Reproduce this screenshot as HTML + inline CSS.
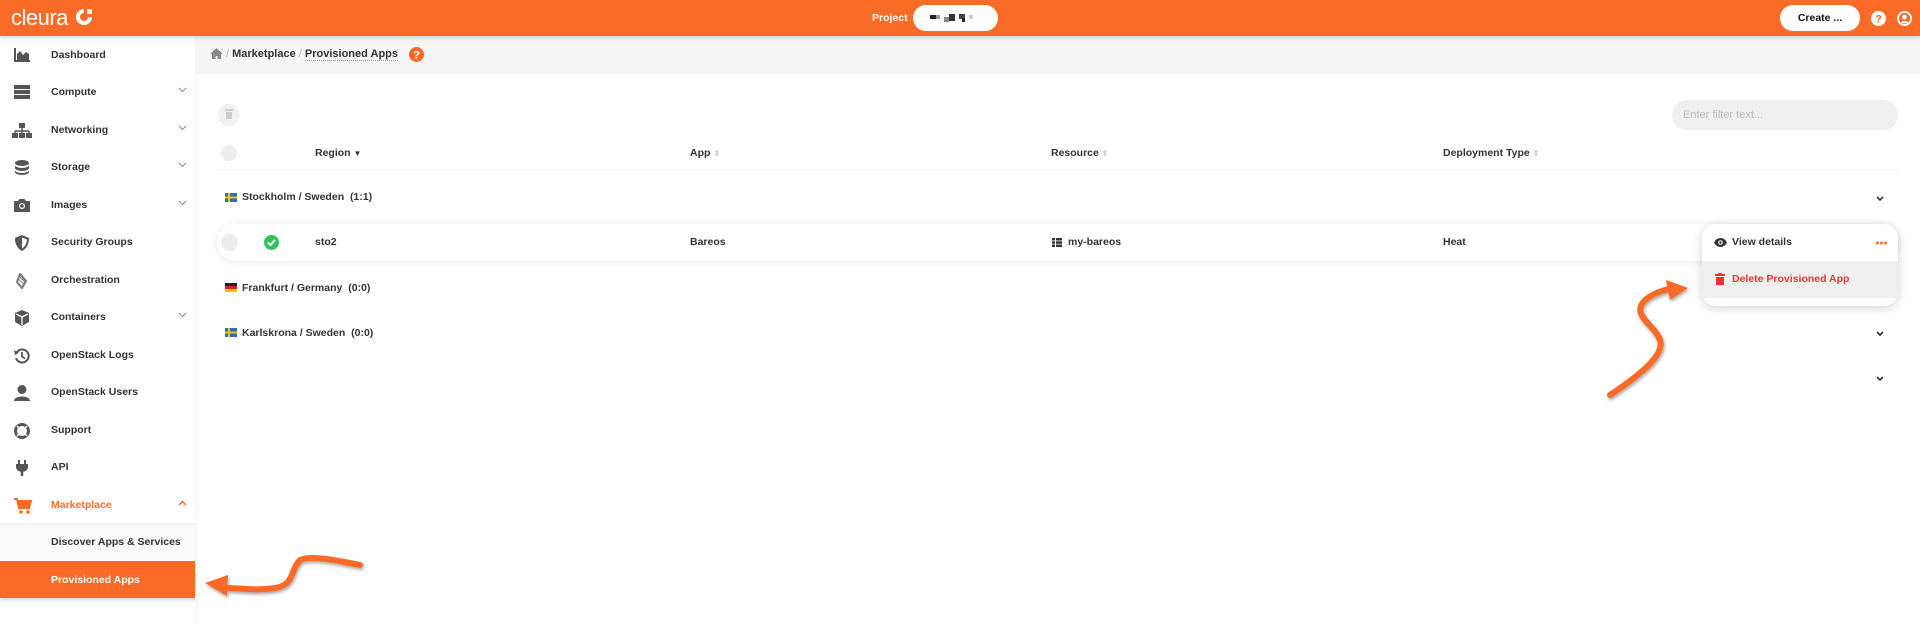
<!DOCTYPE html>
<html><head><meta charset="utf-8"><style>
*{box-sizing:border-box;margin:0;padding:0}
body{width:1920px;height:625px;overflow:hidden;background:#fff;font-family:"Liberation Sans",sans-serif;color:#333;position:relative;font-size:10.5px;font-weight:bold}
.top{position:absolute;left:0;top:0;width:1920px;height:36px;background:#f96b27;box-shadow:0 2px 4px rgba(0,0,0,.15);z-index:5}
.logo{position:absolute;left:11px;top:5px;color:#fff;font-size:22px;font-weight:normal;letter-spacing:-.5px}
.side{position:absolute;left:0;top:36px;width:195px;height:589px;background:#fff;box-shadow:2px 0 4px rgba(0,0,0,.05)}
.mi{position:absolute;left:0;width:195px;height:37px;line-height:37px}
.mi .t{position:absolute;left:51px}
.mi svg.i{position:absolute;left:14px;top:11px}
.chev{position:absolute;left:178px;top:13px}
.crumb{position:absolute;left:195px;top:36px;width:1725px;height:38px;background:#f5f5f5}
.txt{position:absolute;white-space:nowrap}
.circ{position:absolute;width:16px;height:16px;border-radius:50%;background:#ececec}
</style></head><body>
<div class="top">
 <div class="logo">cleura <svg width="20" height="20" viewBox="0 0 20 20" style="vertical-align:-2px"><path d="M10 2a8 8 0 1 0 8 8h-4a4 4 0 1 1-4-4z" fill="#fff"/><rect x="13" y="2" width="5" height="5" fill="#fff"/></svg></div>
 <div class="txt" style="left:872px;top:12px;color:#fff;font-size:10.5px">Project</div>
 <div style="position:absolute;left:913px;top:5px;width:85px;height:26px;border-radius:13px;background:#fff">
  <div style="position:absolute;left:17px;top:10px;width:6px;height:4px;background:#222"></div><div style="position:absolute;left:23px;top:10px;width:4px;height:4px;background:#999"></div>
  <div style="position:absolute;left:31px;top:12px;width:5px;height:5px;background:#888"></div><div style="position:absolute;left:36px;top:9px;width:6px;height:7px;background:#333"></div>
  <div style="position:absolute;left:46px;top:9px;width:6px;height:5px;background:#444"></div><div style="position:absolute;left:49px;top:13px;width:3px;height:4px;background:#222"></div>
  <div style="position:absolute;left:56px;top:10px;width:4px;height:4px;background:#ccc"></div>
 </div>
 <div style="position:absolute;left:1780px;top:5px;width:80px;height:26px;border-radius:13px;background:#fff;text-align:center;line-height:26px;font-size:10.5px;color:#111">Create ...</div>
 <svg style="position:absolute;left:1871px;top:11px" width="15" height="15" viewBox="0 0 16 16"><circle cx="8" cy="8" r="8" fill="#fff"/><text x="8" y="12.5" text-anchor="middle" font-size="12" font-weight="bold" fill="#f96b27" font-family="Liberation Sans">?</text></svg>
 <svg style="position:absolute;left:1897px;top:11px" width="15" height="15" viewBox="0 0 16 16"><circle cx="8" cy="8" r="7" fill="none" stroke="#fff" stroke-width="2"/><circle cx="8" cy="6.5" r="2.5" fill="#fff"/><path d="M3.5 13a5 4 0 0 1 9 0" fill="#fff"/></svg>
</div>

<div class="side">
 <div class="mi" style="top:1px"><svg class="i" width="16" height="14"><path d="M1 0v13h15" stroke="#555" stroke-width="2" fill="none"/><path d="M3 12V6l3 -3 3 4 3-3 3 2v6z" fill="#555"/></svg><span class="t">Dashboard</span></div>
 <div class="mi" style="top:38px"><svg class="i" width="16" height="14"><rect x="0" y="0" width="16" height="4" fill="#555"/><rect x="0" y="5" width="16" height="4" fill="#555"/><rect x="0" y="10" width="16" height="4" fill="#555"/></svg><span class="t">Compute</span><svg class="chev" width="9" height="6"><path d="M1 1l3.5 3.5L8 1" stroke="#888" fill="none"/></svg></div>
 <div class="mi" style="top:76px"><svg class="i" width="20" height="15" style="left:12px"><rect x="7" y="0" width="6" height="5" fill="#555"/><path d="M10 5v3M3 8h14M3 8v2M10 8v2M17 8v2" stroke="#555" stroke-width="1.5"/><rect x="0" y="10" width="6" height="5" fill="#555"/><rect x="7" y="10" width="6" height="5" fill="#555"/><rect x="14" y="10" width="6" height="5" fill="#555"/></svg><span class="t">Networking</span><svg class="chev" width="9" height="6"><path d="M1 1l3.5 3.5L8 1" stroke="#888" fill="none"/></svg></div>
 <div class="mi" style="top:113px"><svg class="i" width="16" height="15"><ellipse cx="8" cy="3" rx="7" ry="3" fill="#555"/><path d="M1 5v3a7 3 0 0 0 14 0V5a7 3 0 0 1-14 0zM1 10v2a7 3 0 0 0 14 0v-2a7 3 0 0 1-14 0z" fill="#555"/></svg><span class="t">Storage</span><svg class="chev" width="9" height="6"><path d="M1 1l3.5 3.5L8 1" stroke="#888" fill="none"/></svg></div>
 <div class="mi" style="top:151px"><svg class="i" width="16" height="14"><path d="M0 3h4l1.5-2h5L12 3h4v11H0z" fill="#555"/><circle cx="8" cy="8" r="3" fill="#fff"/><circle cx="8" cy="8" r="1.8" fill="#555"/></svg><span class="t">Images</span><svg class="chev" width="9" height="6"><path d="M1 1l3.5 3.5L8 1" stroke="#888" fill="none"/></svg></div>
 <div class="mi" style="top:188px"><svg class="i" width="16" height="16"><path d="M8 0L15 3c0 7-3 11-7 13C4 14 1 10 1 3z" fill="#555"/><path d="M8 2.5v11c2.5-1.5 4.5-4 5-9z" fill="#fff"/></svg><span class="t">Security Groups</span></div>
 <div class="mi" style="top:226px"><svg class="i" width="16" height="16"><path d="M6 1l6 7-4 7-5-6z" fill="none" stroke="#777" stroke-width="2"/><path d="M4 6l6 5M6 4l5 5" stroke="#777"/></svg><span class="t">Orchestration</span></div>
 <div class="mi" style="top:263px"><svg class="i" width="16" height="16"><path d="M8 0l7 3v9l-7 4-7-4V3z" fill="#555"/><path d="M2 4l6 3 6-3M8 7v8" stroke="#fff" stroke-width="1.3" fill="none"/></svg><span class="t">Containers</span><svg class="chev" width="9" height="6"><path d="M1 1l3.5 3.5L8 1" stroke="#888" fill="none"/></svg></div>
 <div class="mi" style="top:301px"><svg class="i" width="16" height="16"><path d="M3 4A6.5 6.5 0 1 1 2 10" stroke="#555" stroke-width="2" fill="none"/><path d="M0 2l1 5 4-2z" fill="#555"/><path d="M8 4v4.5l3 2" stroke="#555" stroke-width="1.8" fill="none"/></svg><span class="t">OpenStack Logs</span></div>
 <div class="mi" style="top:338px"><svg class="i" width="16" height="16"><circle cx="8" cy="4.5" r="4.5" fill="#555"/><path d="M0 16c0-6 16-6 16 0z" fill="#555"/></svg><span class="t">OpenStack Users</span></div>
 <div class="mi" style="top:376px"><svg class="i" width="16" height="16"><circle cx="8" cy="8" r="6.5" stroke="#555" stroke-width="3" fill="none"/><circle cx="8" cy="8" r="3" fill="#fff"/><path d="M3 3l3 3M13 3l-3 3M3 13l3-3M13 13l-3-3" stroke="#fff" stroke-width="1.5"/></svg><span class="t">Support</span></div>
 <div class="mi" style="top:413px"><svg class="i" width="16" height="16"><path d="M5 0v4M11 0v4" stroke="#555" stroke-width="2"/><path d="M2 4h12v3a6 5 0 0 1-12 0z" fill="#555"/><path d="M8 10v6" stroke="#555" stroke-width="2.5"/></svg><span class="t">API</span></div>
 <div class="mi" style="top:451px;color:#f96b27"><svg class="i" width="18" height="16"><path d="M0 1h3l2 9h10l2-7H4" fill="none" stroke="#f96b27" stroke-width="2"/><path d="M4 3h13l-2 7H5z" fill="#f96b27"/><circle cx="7" cy="14" r="1.8" fill="#f96b27"/><circle cx="14" cy="14" r="1.8" fill="#f96b27"/></svg><span class="t">Marketplace</span><svg class="chev" width="9" height="6"><path d="M1 5l3.5-3.5L8 5" stroke="#f96b27" stroke-width="1.5" fill="none"/></svg></div>
 <div style="position:absolute;left:0;top:487px;width:195px;height:38px;background:#fafafa;box-shadow:inset 0 3px 4px -3px rgba(0,0,0,.1)"><span class="txt" style="left:51px;top:13px">Discover Apps &amp; Services</span></div>
 <div style="position:absolute;left:0;top:525px;width:195px;height:37px;background:#f96b27;color:#fff;box-shadow:0 2px 2px rgba(0,0,0,.15)"><span class="txt" style="left:51px;top:13px">Provisioned Apps</span></div>
</div>

<div class="crumb">
 <svg style="position:absolute;left:15px;top:12px" width="13" height="11" viewBox="0 0 13 11"><path d="M6.5 0L0 6h2v5h3.5V8h2v3H11V6h2z" fill="#888"/></svg>
 <span class="txt" style="left:31px;top:12px;font-size:11px;color:#333"><span style="color:#bbb;font-weight:normal">/</span> Marketplace <span style="color:#bbb;font-weight:normal">/</span> <span style="border-bottom:1px dotted #999">Provisioned Apps</span></span>
 <svg style="position:absolute;left:214px;top:11px" width="15" height="15" viewBox="0 0 16 16"><circle cx="8" cy="8" r="8" fill="#f96b27"/><text x="8" y="12.5" text-anchor="middle" font-size="12" font-weight="bold" fill="#fff" font-family="Liberation Sans">?</text></svg>
</div>

<div class="circ" style="left:218px;top:104px;width:22px;height:22px;background:#f0f0f0"></div>
<svg style="position:absolute;left:225px;top:109px" width="8" height="10"><rect x="0" y="0" width="8" height="2" fill="#ccc"/><rect x="1" y="3" width="6" height="7" fill="#ccc"/></svg>
<div style="position:absolute;left:1672px;top:100px;width:226px;height:30px;border-radius:15px;background:#efefef"><span class="txt" style="left:11px;top:9px;color:#bbb;font-weight:normal;font-size:11px">Enter filter text...</span></div>

<div class="circ" style="left:221px;top:145px"></div>
<span class="txt" style="left:315px;top:147px">Region <span style="font-size:8px">▼</span></span>
<span class="txt" style="left:690px;top:147px">App <span style="color:#ccc;font-size:8px">⇕</span></span>
<span class="txt" style="left:1051px;top:147px">Resource <span style="color:#ccc;font-size:8px">⇕</span></span>
<span class="txt" style="left:1443px;top:147px">Deployment Type <span style="color:#ccc;font-size:8px">⇕</span></span>
<div style="position:absolute;left:215px;top:169px;width:1683px;height:1px;background:#f4f4f4"></div>

<svg style="position:absolute;left:225px;top:193px" width="12" height="9"><rect width="12" height="9" fill="#2f6fb8"/><rect x="3" width="2" height="9" fill="#f5c400"/><rect y="3.5" width="12" height="2" fill="#f5c400"/></svg>
<span class="txt" style="left:242px;top:191px">Stockholm / Sweden&nbsp; (1:1)</span>
<svg style="position:absolute;left:1876px;top:196px" width="8" height="6"><path d="M1 1l3 3 3-3" stroke="#333" stroke-width="1.6" fill="none"/></svg>

<div style="position:absolute;left:217px;top:224px;width:1681px;height:37px;border-radius:18px;background:#fff;box-shadow:0 1px 8px rgba(0,0,0,.1)"></div>
<div class="circ" style="left:221px;top:234px;width:17px;height:17px"></div>
<svg style="position:absolute;left:264px;top:235px" width="15" height="15"><circle cx="7.5" cy="7.5" r="7.5" fill="#33c25a"/><path d="M4 7.5l2.5 2.5 4.5-5" stroke="#fff" stroke-width="2" fill="none"/></svg>
<span class="txt" style="left:315px;top:236px">sto2</span>
<span class="txt" style="left:690px;top:236px">Bareos</span>
<svg style="position:absolute;left:1052px;top:238px" width="10" height="9"><rect width="3" height="2.5" fill="#333"/><rect x="4" width="6" height="2.5" fill="#333"/><rect y="3.3" width="3" height="2.5" fill="#333"/><rect x="4" y="3.3" width="6" height="2.5" fill="#333"/><rect y="6.5" width="3" height="2.5" fill="#333"/><rect x="4" y="6.5" width="6" height="2.5" fill="#333"/></svg>
<span class="txt" style="left:1068px;top:236px">my-bareos</span>
<span class="txt" style="left:1443px;top:236px">Heat</span>

<div style="position:absolute;left:1702px;top:224px;width:196px;height:82px;border-radius:14px;background:#fff;box-shadow:0 2px 10px rgba(0,0,0,.18);overflow:hidden">
 <svg style="position:absolute;left:12px;top:14px" width="13" height="9"><path d="M0 4.5C3 -1.5 10 -1.5 13 4.5 10 10.5 3 10.5 0 4.5z" fill="#333"/><circle cx="6.5" cy="4.5" r="2.3" fill="#fff"/><circle cx="6.5" cy="4.5" r="1.2" fill="#333"/></svg>
 <span class="txt" style="left:30px;top:12px">View details</span>
 <svg style="position:absolute;left:174px;top:17px" width="11" height="4"><circle cx="1.5" cy="2" r="1.5" fill="#f96b27"/><circle cx="5.5" cy="2" r="1.5" fill="#f96b27"/><circle cx="9.5" cy="2" r="1.5" fill="#f96b27"/></svg>
 <div style="position:absolute;left:0;top:37px;width:196px;height:37px;background:#efefef">
  <svg style="position:absolute;left:13px;top:12px" width="10" height="12"><rect x="0" y="1" width="10" height="2" fill="#ee3333"/><rect x="3" y="0" width="4" height="1.5" fill="#ee3333"/><rect x="1" y="4" width="8" height="8" fill="#ee3333"/></svg>
  <span class="txt" style="left:30px;top:12px;color:#ee3333">Delete Provisioned App</span>
 </div>
</div>

<svg style="position:absolute;left:225px;top:283px" width="12" height="9"><rect width="12" height="3" fill="#222"/><rect y="3" width="12" height="3" fill="#dd2222"/><rect y="6" width="12" height="3" fill="#f5c400"/></svg>
<span class="txt" style="left:242px;top:282px">Frankfurt / Germany&nbsp; (0:0)</span>

<svg style="position:absolute;left:225px;top:328px" width="12" height="9"><rect width="12" height="9" fill="#2f6fb8"/><rect x="3" width="2" height="9" fill="#f5c400"/><rect y="3.5" width="12" height="2" fill="#f5c400"/></svg>
<span class="txt" style="left:242px;top:327px">Karlskrona / Sweden&nbsp; (0:0)</span>
<svg style="position:absolute;left:1876px;top:331px" width="8" height="6"><path d="M1 1l3 3 3-3" stroke="#333" stroke-width="1.6" fill="none"/></svg>
<svg style="position:absolute;left:1876px;top:376px" width="8" height="6"><path d="M1 1l3 3 3-3" stroke="#333" stroke-width="1.6" fill="none"/></svg>

<svg style="position:absolute;left:0;top:0" width="1920" height="625">
 <defs><filter id="sh"><feDropShadow dx="1" dy="2" stdDeviation="1.5" flood-opacity=".35"/></filter></defs>
 <g filter="url(#sh)">
  <path d="M360 565C335 560 310 555 300 560C290 570 295 585 275 588C255 591 240 588 225 588" stroke="#f96b27" stroke-width="6" fill="none" stroke-linecap="round"/>
  <path d="M205 583L228 575L227 596z" fill="#f96b27"/>
  <path d="M1610 395C1640 375 1665 355 1660 340C1655 325 1630 315 1645 300C1655 292 1665 290 1672 288" stroke="#f96b27" stroke-width="6" fill="none" stroke-linecap="round"/>
  <path d="M1688 288L1666 280L1670 300z" fill="#f96b27"/>
 </g>
</svg>
</body></html>
